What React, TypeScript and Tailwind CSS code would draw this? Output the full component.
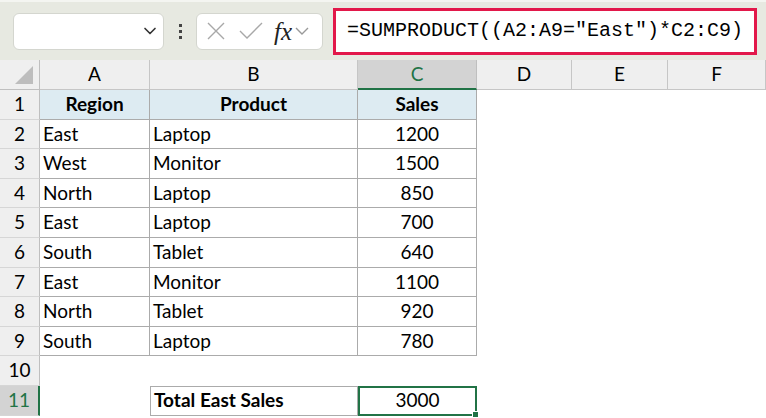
import { ChevronDown } from "lucide-react";

const rows: [string, string, string][] = [
  ["East", "Laptop", "1200"],
  ["West", "Monitor", "1500"],
  ["North", "Laptop", "850"],
  ["East", "Laptop", "700"],
  ["South", "Tablet", "640"],
  ["East", "Monitor", "1100"],
  ["North", "Tablet", "920"],
  ["South", "Laptop", "780"],
];

const cols = ["A", "B", "C", "D", "E", "F"];

function RowHead({ n, active }: { n: number; active?: boolean }) {
  return (
    <div
      className={
        "flex h-[29.6px] items-center justify-center border-b border-[#d6d6d6] text-[19px] " +
        (active
          ? "bg-[#d3d3d3] text-[#217346] border-r-2 border-r-[#217346]"
          : "bg-[#efefef] text-black border-r border-r-[#bfbfbf]")
      }
    >
      {n}
    </div>
  );
}

const cell = "flex h-[29.6px] items-center border-r border-b border-[#ababab] text-[19px] text-black";

export default function App() {
  return (
    <div className="h-[418px] w-[766px] overflow-hidden bg-white" style={{ fontFamily: "Lato, 'Open Sans', sans-serif" }}>
      {/* formula bar */}
      <div className="flex h-[60px] items-center border-t-2 border-[#f4f5f1] bg-[#e7e9e1]">
        <div className="ml-[13px] flex h-[37px] w-[151px] items-center justify-end rounded-[6px] border border-[#d4d6cf] bg-white pr-[3px]">
          <ChevronDown className="h-5 w-5 text-[#333]" strokeWidth={2} />
        </div>
        <div className="flex w-[32px] flex-col items-center gap-[3px]">
          <span className="h-[3px] w-[3px] bg-[#444]" />
          <span className="h-[3px] w-[3px] bg-[#444]" />
          <span className="h-[3px] w-[3px] bg-[#444]" />
        </div>
        <div className="flex h-[37px] w-[127px] items-center rounded-[6px] border border-[#d4d6cf] bg-white pl-[9px]">
          <svg width="20" height="20" viewBox="0 0 20 20" className="text-[#a8a8a8]">
            <path d="M2 2 L18 18 M18 2 L2 18" stroke="currentColor" strokeWidth="1.4" fill="none" />
          </svg>
          <svg width="26" height="20" viewBox="0 0 26 20" className="ml-[12px] text-[#a8a8a8]">
            <path d="M2 10 L9 17 L24 2" stroke="currentColor" strokeWidth="1.4" fill="none" />
          </svg>
          <span
            className="ml-[10px] text-[25px] italic leading-none text-[#222]"
            style={{ fontFamily: "'Liberation Serif', serif" }}
          >
            fx
          </span>
          <svg width="14" height="10" viewBox="0 0 14 10" className="ml-[3px] text-[#999]">
            <path d="M1 2 L7 8 L13 2" stroke="currentColor" strokeWidth="1.4" fill="none" />
          </svg>
        </div>
        <div className="ml-[10px] flex h-[47px] w-[424px] items-center border-[3px] border-[#e2184a] bg-white pl-[11px]">
          <span
            className="whitespace-pre text-[20px] text-black"
            style={{ fontFamily: "'Liberation Mono', monospace" }}
          >
            =SUMPRODUCT((A2:A9="East")*C2:C9)
          </span>
        </div>
      </div>

      {/* grid */}
      <div className="grid grid-cols-[40px_110px_208px_119px_95px_96px_98px]">
        {/* header row */}
        <div className="relative h-[30px] border-r border-b border-[#bfbfbf] bg-[#efefef]">
          <svg width="20" height="20" viewBox="0 0 20 20" className="absolute right-[5px] bottom-[4px]">
            <path d="M19 1 L19 19 L1 19 Z" fill="#bdbdbd" />
          </svg>
        </div>
        {cols.map((c) =>
          c === "C" ? (
            <div
              key={c}
              className="flex h-[30px] items-center justify-center border-r border-b-2 border-r-[#bfbfbf] border-b-[#217346] bg-[#d3d3d3] text-[19px] text-[#217346]"
            >
              {c}
            </div>
          ) : (
            <div
              key={c}
              className="flex h-[30px] items-center justify-center border-r border-b border-[#c6c6c6] bg-[#efefef] text-[19px] text-black"
            >
              {c}
            </div>
          )
        )}

        {/* row 1 */}
        <RowHead n={1} />
        <div className={cell + " justify-center bg-[#ddebf2] font-bold"}>Region</div>
        <div className={cell + " justify-center bg-[#ddebf2] font-bold"}>Product</div>
        <div className={cell + " justify-center bg-[#ddebf2] font-bold"}>Sales</div>
        <div className="col-span-3" />

        {rows.map(([r, p, s], i) => (
          <div key={i} className="contents">
            <RowHead n={i + 2} />
            <div className={cell + " pl-[3px]"}>{r}</div>
            <div className={cell + " pl-[3px]"}>{p}</div>
            <div className={cell + " justify-center"}>{s}</div>
            <div className="col-span-3" />
          </div>
        ))}

        {/* row 10 */}
        <RowHead n={10} />
        <div className="col-span-6" />

        {/* row 11 */}
        <RowHead n={11} active />
        <div />
        <div className="flex h-[29.6px] items-center border border-[#ababab] pl-[3px] text-[19px] font-bold text-black">
          Total East Sales
        </div>
        <div className="relative flex h-[29.6px] items-center justify-center border-2 border-[#217346] text-[19px] text-black">
          3000
          <span className="absolute -right-[4px] -bottom-[4px] h-[7px] w-[7px] border border-white bg-[#217346]" />
        </div>
        <div className="col-span-3" />
      </div>
    </div>
  );
}
